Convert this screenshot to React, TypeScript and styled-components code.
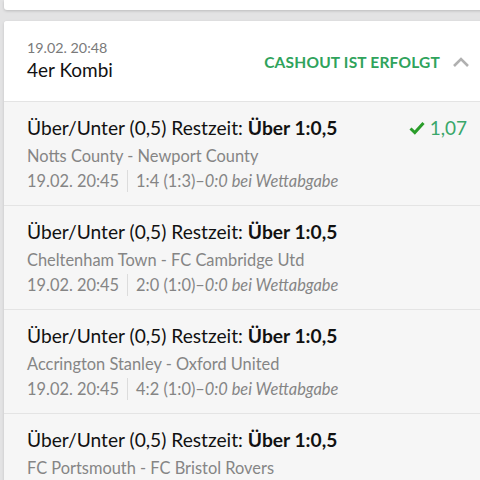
import * as React from 'react';
import styled, { createGlobalStyle } from 'styled-components';

const GlobalStyle = createGlobalStyle`
  html, body {
    margin: 0;
    padding: 0;
    background: #e3e3e4;
    overflow: hidden;
    font-family: Lato, "Noto Sans", sans-serif;
  }
`;

type Leg = {
  market: string;
  pick: string;
  teams: string;
  date: string;
  score: string;
  atBet: string;
  odds?: string;
};

const legs: Leg[] = [
  {
    market: 'Über/Unter (0,5) Restzeit:',
    pick: 'Über 1:0,5',
    teams: 'Notts County - Newport County',
    date: '19.02. 20:45',
    score: '1:4 (1:3)',
    atBet: '0:0 bei Wettabgabe',
    odds: '1,07',
  },
  {
    market: 'Über/Unter (0,5) Restzeit:',
    pick: 'Über 1:0,5',
    teams: 'Cheltenham Town - FC Cambridge Utd',
    date: '19.02. 20:45',
    score: '2:0 (1:0)',
    atBet: '0:0 bei Wettabgabe',
  },
  {
    market: 'Über/Unter (0,5) Restzeit:',
    pick: 'Über 1:0,5',
    teams: 'Accrington Stanley - Oxford United',
    date: '19.02. 20:45',
    score: '4:2 (1:0)',
    atBet: '0:0 bei Wettabgabe',
  },
  {
    market: 'Über/Unter (0,5) Restzeit:',
    pick: 'Über 1:0,5',
    teams: 'FC Portsmouth - FC Bristol Rovers',
    date: '19.02. 20:45',
    score: '3:1 (2:0)',
    atBet: '0:0 bei Wettabgabe',
  },
];

const App: React.FC = () => {
  return (
    <>
      <GlobalStyle />
      <Page>
        <PrevCard />
        <Card>
          <Header>
            <div>
              <PlacedAt>19.02. 20:48</PlacedAt>
              <BetType>4er Kombi</BetType>
            </div>
            <Status>
              CASHOUT IST ERFOLGT
              <svg width="18" height="12" viewBox="0 0 18 12">
                <path d="M2 10 L9 3 L16 10" fill="none" stroke="#b0b0b0" strokeWidth="2.6" />
              </svg>
            </Status>
          </Header>
          {legs.map((leg, i) => (
            <LegRow key={i}>
              <LegTop>
                <Market>
                  {leg.market} <b>{leg.pick}</b>
                </Market>
                {leg.odds && (
                  <Odds>
                    <svg width="16" height="14" viewBox="0 0 16 14">
                      <path d="M1.5 7.5 L5.8 11.5 L14.5 2" fill="none" stroke="#2a9d2a" strokeWidth="3" />
                    </svg>
                    {leg.odds}
                  </Odds>
                )}
              </LegTop>
              <Teams>{leg.teams}</Teams>
              <Meta>
                <span>{leg.date}</span>
                <Divider />
                <span>
                  {leg.score}–<i>{leg.atBet}</i>
                </span>
              </Meta>
            </LegRow>
          ))}
        </Card>
      </Page>
    </>
  );
};

export default App;

const Page = styled.div`
  display: flex;
  flex-direction: column;
  gap: 11px;
  padding-left: 4px;
  margin-right: -6px;
`;

const PrevCard = styled.div`
  height: 10px;
  background: #fff;
  border-radius: 0 0 3px 3px;
  box-shadow: 0 1px 3px rgba(0, 0, 0, 0.18);
`;

const Card = styled.div`
  background: #f6f6f6;
  border-radius: 3px 3px 0 0;
  box-shadow: 0 1px 3px rgba(0, 0, 0, 0.15);
`;

const Header = styled.div`
  display: flex;
  justify-content: space-between;
  align-items: center;
  padding: 18px 16px 18px 23px;
  background: #fff;
  border-radius: 3px 3px 0 0;
  border-bottom: 1px solid #e4e4e4;
`;

const PlacedAt = styled.div`
  font-size: 14.3px;
  line-height: 18px;
  color: #7a7a7a;
`;

const BetType = styled.div`
  font-size: 19px;
  line-height: 26px;
  color: #111;
`;

const Status = styled.div`
  display: flex;
  align-items: center;
  gap: 12px;
  margin-top: 2px;
  font-size: 15.5px;
  font-weight: 700;
  letter-spacing: 0.2px;
  color: #2fa35c;
`;

const LegRow = styled.div`
  padding: 13px 19px 12px 23px;
  border-bottom: 1px solid #e4e4e4;
`;

const LegTop = styled.div`
  display: flex;
  justify-content: space-between;
  align-items: center;
`;

const Market = styled.div`
  font-size: 19.2px;
  line-height: 26px;
  color: #111;

  b {
    font-weight: 700;
  }
`;

const Odds = styled.div`
  display: flex;
  align-items: center;
  gap: 5px;
  font-size: 19px;
  line-height: 26px;
  color: #3aa76a;
`;

const Teams = styled.div`
  margin-top: 2px;
  font-size: 16.4px;
  line-height: 26px;
  color: #858585;
`;

const Meta = styled.div`
  display: flex;
  align-items: center;
  font-size: 16.4px;
  line-height: 24px;
  color: #858585;

  i {
    font-style: italic;
  }
`;

const Divider = styled.span`
  width: 1px;
  height: 22px;
  margin: 0 8px;
  background: #dcdcdc;
`;
